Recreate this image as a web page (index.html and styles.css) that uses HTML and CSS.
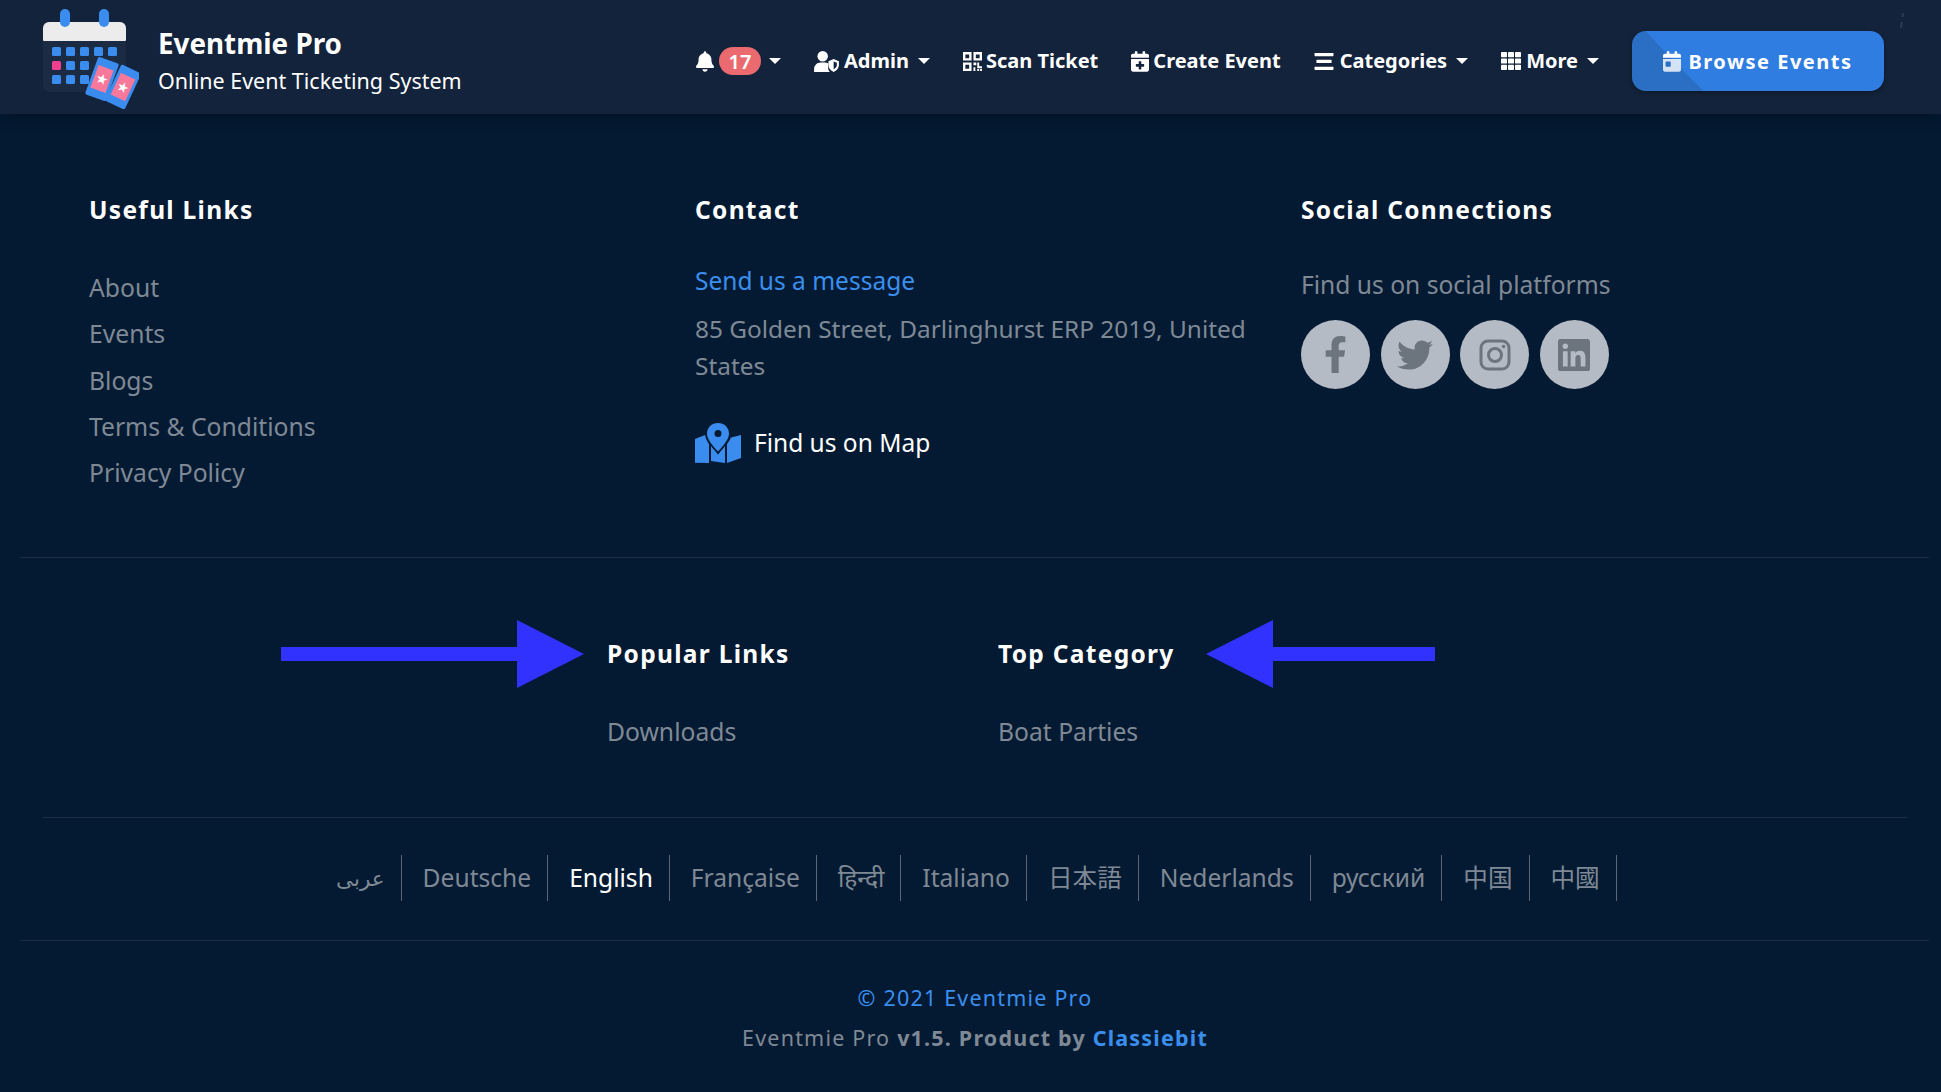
FILE: index.html
```html
<!DOCTYPE html>
<html lang="en">
<head>
<meta charset="utf-8">
<title>Eventmie Pro</title>
<link rel="stylesheet" href="styles.css">
</head>
<body>
<header class="nav">
  <a class="brand">
    <svg class="brand-logo" viewBox="0 0 96 100">
      <rect x="0" y="13" width="83" height="70" rx="6" fill="#1b2b44"/>
      <path d="M0 31V19a6 6 0 0 1 6-6h71a6 6 0 0 1 6 6v12a1 1 0 0 1-1 1H1a1 1 0 0 1-1-1z" fill="#ececec"/>
      <rect x="17" y="0" width="10" height="18" rx="5" fill="#3a8dee"/>
      <rect x="56" y="0" width="10" height="18" rx="5" fill="#3a8dee"/>
      <g fill="#3a8dee">
        <rect x="9" y="38" width="9" height="9" rx="1.5"/><rect x="23" y="38" width="9" height="9" rx="1.5"/><rect x="37" y="38" width="9" height="9" rx="1.5"/><rect x="51" y="38" width="9" height="9" rx="1.500"/><rect x="65" y="38" width="9" height="9" rx="1.5"/>
        <rect x="23" y="52" width="9" height="9" rx="1.5"/><rect x="37" y="52" width="9" height="9" rx="1.5"/>
        <rect x="9" y="66" width="9" height="9" rx="1.5"/><rect x="23" y="66" width="9" height="9" rx="1.5"/><rect x="37" y="66" width="9" height="9" rx="1.5"/>
      </g>
      <rect x="9" y="52" width="9" height="9" rx="1.5" fill="#ef3f8e"/>
      <g transform="rotate(20 59 70)">
        <rect x="48" y="50" width="22" height="40" rx="2" fill="#3a8dee"/>
        <rect x="51" y="58" width="16" height="24" fill="#f7789b"/>
        <text x="59" y="75" class="logo-star">★</text>
      </g>
      <g transform="rotate(25 80 78)">
        <rect x="69" y="58" width="22" height="40" rx="2" fill="#3a8dee"/>
        <rect x="72" y="66" width="16" height="24" fill="#f7789b"/>
        <text x="80" y="83" class="logo-star">★</text>
      </g>
    </svg>
    <span class="brand-text">
      <strong class="brand-name">Eventmie Pro</strong>
      <span class="brand-tag">Online Event Ticketing System</span>
    </span>
  </a>
  <nav class="menu">
    <a class="menu-item menu-bell">
      <svg class="ico ico-bell" viewBox="0 0 448 512"><path d="M224 512c35.32 0 63.97-28.65 63.97-64H160.03c0 35.35 28.65 64 63.97 64zm215.39-149.71c-19.32-20.76-55.47-51.99-55.47-154.29 0-77.7-54.48-139.9-127.94-155.16V32c0-17.67-14.32-32-31.98-32s-31.98 14.33-31.98 32v20.84C118.56 68.1 64.08 130.3 64.08 208c0 102.3-36.15 133.53-55.47 154.29-6 6.45-8.66 14.16-8.61 21.71.11 16.4 12.98 32 32.1 32h383.8c19.12 0 32-15.6 32.1-32 .05-7.55-2.61-15.27-8.61-21.71z"/></svg>
      <span class="badge">17</span>
      <i class="caret"></i>
    </a>
    <a class="menu-item">
      <svg class="ico ico-user" viewBox="0 0 26 22"><circle cx="9" cy="5.5" r="5.5"/><path d="M0 22v-3c0-4 3-7 7-7h4c1.500 0 2.700.4 3.800 1v5c0 1.600.7 3 1.900 4z"/><path d="M20.500 8.500l5.500 2.200v4c0 3.500-2.500 6-5.500 7.300-3-1.300-5.500-3.800-5.500-7.300v-4zm0 2.500v8.200c1.700-.9 3.300-2.500 3.300-4.600v-2.300z" fill-rule="evenodd"/></svg>
      <span>Admin</span>
      <i class="caret"></i>
    </a>
    <a class="menu-item">
      <svg class="ico ico-qr" viewBox="0 0 20 20"><path fill-rule="evenodd" d="M0 0h9v9H0zm2.500 2.500v4h4v-4zM11 0h9v9h-9zm2.500 2.500v4h4v-4zM0 11h9v9H0zm2.500 2.500v4h4v-4z"/><path d="M11 11h3v3h-3zM15 11h2v4h3v2h-5zM11 16h2v4h-2zM15 18h2v2h-2zM18 18h2v2h-2z"/></svg>
      <span>Scan Ticket</span>
    </a>
    <a class="menu-item">
      <svg class="ico ico-cal" viewBox="0 0 448 512"><path d="M436 160H12c-6.600 0-12-5.400-12-12v-36c0-26.500 21.500-48 48-48h48V12c0-6.600 5.400-12 12-12h40c6.600 0 12 5.400 12 12v52h128V12c0-6.600 5.400-12 12-12h40c6.600 0 12 5.400 12 12v52h48c26.500 0 48 21.500 48 48v36c0 6.600-5.400 12-12 12zM12 192h424c6.600 0 12 5.400 12 12v260c0 26.500-21.500 48-48 48H48c-26.500 0-48-21.500-48-48V204c0-6.600 5.400-12 12-12zm316 140c0-6.600-5.400-12-12-12h-60v-60c0-6.600-5.400-12-12-12h-40c-6.600 0-12 5.400-12 12v60h-60c-6.600 0-12 5.400-12 12v40c0 6.600 5.400 12 12 12h60v60c0 6.600 5.400 12 12 12h40c6.600 0 12-5.400 12-12v-60h60c6.600 0 12-5.400 12-12v-40z"/></svg>
      <span>Create Event</span>
    </a>
    <a class="menu-item">
      <svg class="ico ico-bars" viewBox="0 0 20 18"><rect y="0" width="20" height="3.500" rx=".5"/><rect x="2" y="7.200" width="16" height="3.500" rx=".5"/><rect y="14.500" width="20" height="3.500" rx=".5"/></svg>
      <span>Categories</span>
      <i class="caret"></i>
    </a>
    <a class="menu-item">
      <svg class="ico ico-grid" viewBox="0 0 20 18"><rect width="6" height="5.200" rx=".7"/><rect x="7" width="6" height="5.200" rx=".7"/><rect x="14" width="6" height="5.200" rx=".7"/><rect y="6.400" width="6" height="5.200" rx=".7"/><rect x="7" y="6.400" width="6" height="5.200" rx=".7"/><rect x="14" y="6.400" width="6" height="5.200" rx=".7"/><rect y="12.800" width="6" height="5.200" rx=".7"/><rect x="7" y="12.800" width="6" height="5.200" rx=".7"/><rect x="14" y="12.800" width="6" height="5.200" rx=".7"/></svg>
      <span>More</span>
      <i class="caret"></i>
    </a>
    <a class="browse">
      <svg class="ico ico-browse" viewBox="0 0 448 512"><path opacity=".8" d="M0 464c0 26.500 21.500 48 48 48h352c26.500 0 48-21.500 48-48V192H0v272zm64-192c0-8.800 7.200-16 16-16h96c8.800 0 16 7.200 16 16v96c0 8.800-7.200 16-16 16H80c-8.800 0-16-7.200-16-16v-96z" fill-rule="evenodd"/><path d="M400 64h-48V16c0-8.800-7.200-16-16-16h-32c-8.800 0-16 7.200-16 16v48H160V16c0-8.800-7.200-16-16-16h-32c-8.800 0-16 7.200-16 16v48H48C21.500 64 0 85.500 0 112v48h448v-48c0-26.500-21.500-48-48-48z"/></svg>
      <span>Browse Events</span>
    </a>
  </nav>
  <i class="speck"></i>
</header>

<footer class="footer">
  <section class="columns">
    <div class="col">
      <h3 class="col-title">Useful Links</h3>
      <ul class="links">
        <li>About</li><li>Events</li><li>Blogs</li><li>Terms &amp; Conditions</li><li>Privacy Policy</li>
      </ul>
    </div>
    <div class="col">
      <h3 class="col-title">Contact</h3>
      <a class="contact-link">Send us a message</a>
      <p class="address">85 Golden Street, Darlinghurst ERP 2019, United States</p>
      <a class="map-link">
        <svg class="map-ico" viewBox="0 0 46 40"><path fill="#3a8dee" fill-rule="evenodd" d="M23 0c6.500 0 11 4.700 11 10.500C34 17 27 24 23 28.500 19 24 12 17 12 10.500 12 4.700 16.500 0 23 0zm0 7a3.500 3.500 0 1 0 0 7 3.500 3.500 0 0 0 0-7z"/><path fill="#3a8dee" d="M0 16l10-4c.5 3.500 2.500 7 4 9v19L0 39.800c0 0 0-23.800 0-23.800zM16 23c2 2.800 5 6 7 8.500 2-2.500 5-5.700 7-8.500v17l-14-2zM32 21c1.500-2 3-4 4-6.500l10-2.500v23l-14 5z"/></svg>
        <span>Find us on Map</span>
      </a>
    </div>
    <div class="col">
      <h3 class="col-title">Social Connections</h3>
      <p class="social-lead">Find us on social platforms</p>
      <div class="socials">
        <a class="social"><svg class="social-ico social-fb" viewBox="0 0 320 512"><path d="M279.140 288l14.220-92.660h-88.910v-60.130c0-25.350 12.420-50.060 52.240-50.060h40.420V6.260S260.430 0 225.360 0c-73.220 0-121.080 44.380-121.080 124.720v70.620H22.890V288h81.390v224h100.170V288z"/></svg></a>
        <a class="social"><svg class="social-ico social-tw" viewBox="0 0 512 512"><path d="M459.37 151.716c.325 4.548.325 9.097.325 13.645 0 138.720-105.583 298.558-298.558 298.558-59.452 0-114.680-17.219-161.137-47.106 8.447.974 16.568 1.299 25.340 1.299 49.055 0 94.213-16.568 130.274-44.832-46.132-.975-84.792-31.188-98.112-72.772 6.498.974 12.995 1.624 19.818 1.624 9.421 0 18.843-1.300 27.614-3.573-48.081-9.747-84.143-51.980-84.143-102.985v-1.299c13.969 7.797 30.214 12.670 47.431 13.319-28.264-18.843-46.781-51.005-46.781-87.391 0-19.492 5.197-37.360 14.294-52.954 51.655 63.675 129.300 105.258 216.365 109.807-1.624-7.797-2.599-15.918-2.599-24.040 0-57.828 46.782-104.934 104.934-104.934 30.213 0 57.502 12.670 76.670 33.137 23.715-4.548 46.456-13.320 66.599-25.340-7.798 24.366-24.366 44.833-46.132 57.827 21.117-2.273 41.584-8.122 60.426-16.243-14.292 20.791-32.161 39.308-52.628 54.253z"/></svg></a>
        <a class="social"><svg class="social-ico" viewBox="0 0 32 32"><rect x="2" y="2" width="28" height="28" rx="7" fill="none" stroke="#6c757d" stroke-width="3"/><circle cx="16" cy="16" r="6.500" fill="none" stroke="#6c757d" stroke-width="3"/><circle cx="24.500" cy="7.500" r="1.800"/></svg></a>
        <a class="social"><svg class="social-ico" viewBox="0 32 448 448"><path d="M416 32H31.900C14.300 32 0 46.500 0 64.300v383.400C0 465.500 14.300 480 31.900 480H416c17.600 0 32-14.500 32-32.300V64.300c0-17.800-14.400-32.300-32-32.300zM135.400 416H69V202.200h66.500V416zm-33.200-243c-21.300 0-38.500-17.300-38.500-38.500S80.900 96 102.200 96c21.200 0 38.500 17.300 38.500 38.500 0 21.300-17.200 38.500-38.500 38.500zm282.100 243h-66.400V312c0-24.800-.5-56.700-34.500-56.700-34.600 0-39.900 27-39.900 54.900V416h-66.400V202.200h63.700v29.200h.9c8.900-16.800 30.600-34.500 62.900-34.500 67.200 0 79.700 44.300 79.700 101.900V416z"/></svg></a>
      </div>
    </div>
  </section>

  <hr class="rule">

  <section class="popular">
    <div class="pop-col pop-col-links">
      <svg class="arrow arrow-right" viewBox="0 0 303 68"><path d="M0 27h236V0l67 34-67 34V41H0z"/></svg>
      <h3 class="col-title">Popular Links</h3>
      <p class="pop-item">Downloads</p>
    </div>
    <div class="pop-col pop-col-cat">
      <svg class="arrow arrow-left" viewBox="0 0 229 68"><path d="M229 27H67V0L0 34l67 34V41h162z"/></svg>
      <h3 class="col-title">Top Category</h3>
      <p class="pop-item">Boat Parties</p>
    </div>
  </section>

  <hr class="rule rule-inset">

  <ul class="langs">
    <li class="lang lang-ar">عربى</li>
    <li class="lang">Deutsche</li>
    <li class="lang lang-active">English</li>
    <li class="lang">Française</li>
    <li class="lang">हिन्दी</li>
    <li class="lang">Italiano</li>
    <li class="lang">日本語</li>
    <li class="lang">Nederlands</li>
    <li class="lang">русский</li>
    <li class="lang">中国</li>
    <li class="lang">中國</li>
  </ul>

  <hr class="rule">

  <div class="credits">
    <p class="credit-line"><span class="blue">© 2021 Eventmie Pro</span></p>
    <p class="credit-line">Eventmie Pro <b>v1.5. Product by</b> <b class="blue">Classiebit</b></p>
  </div>
</footer>
</body>
</html>
```
FILE: styles.css
```css
* { box-sizing: border-box; }
html, body { margin: 0; padding: 0; }
body {
  width: 1941px;
  height: 1092px;
  overflow: hidden;
  background: #041a32;
  font-family: "Noto Sans", "DejaVu Sans", "Noto Sans CJK JP", sans-serif;
  color: #7f8995;
}
h3, p, ul { margin: 0; padding: 0; }
ul { list-style: none; }

/* top bar */
.nav {
  height: 114px;
  background: #13233b;
  display: flex;
  align-items: center;
  justify-content: space-between;
  padding: 8px 57px 0 43px;
  box-shadow: 0 4px 12px rgba(0, 8, 20, .35);
  position: relative;
}
.brand { display: flex; align-items: center; gap: 19px; margin-top: 3px; }
.brand-logo { width: 96px; height: 100px; margin-bottom: 7px; }
.logo-star { font-family: "DejaVu Sans", sans-serif; font-size: 14px; fill: #fff; text-anchor: middle; }
.brand-text { display: flex; flex-direction: column; color: #fff; }
.brand-name { font-size: 27.800px; line-height: 37px; font-weight: 700; }
.brand-tag { font-size: 21.500px; line-height: 38px; }
.menu { display: flex; align-items: center; gap: 33px; color: #fff; font-size: 20px; font-weight: 700; }
.menu-item { display: flex; align-items: center; gap: 4px; line-height: 28px; }
.ico { fill: #fff; display: block; flex: none; }
.ico-bell { width: 18px; height: 21px; margin-right: 1px; }
.ico-user { width: 25px; height: 21px; margin-right: 1px; }
.ico-qr { width: 19px; height: 19px; }
.ico-cal { width: 18px; height: 21px; }
.ico-bars { width: 20px; height: 17px; margin-right: 2px; }
.ico-grid { width: 20px; height: 18px; margin-right: 1px; }
.badge {
  background: #ea6a6f;
  color: #fff;
  border-radius: 14px;
  height: 28px;
  width: 42px;
  text-align: center;
  font-size: 20px;
  line-height: 29px;
  font-weight: 600;
}
.caret {
  width: 0;
  height: 0;
  margin-left: 5px;
  border: 6px solid transparent;
  border-top: 6px solid #fff;
  border-bottom: 0;
}
.menu-bell .caret { margin-left: 4px; }
.browse {
  width: 252px;
  height: 60px;
  border-radius: 14px;
  background: linear-gradient(46deg, #2b6fc4 0, #2b6fc4 23%, #2f7de0 23%);
  box-shadow: 0 2px 5px rgba(0, 0, 0, .3);
  display: flex;
  align-items: center;
  justify-content: center;
  gap: 7px;
  letter-spacing: 1.500px;
}
.ico-browse { width: 18px; height: 21px; }
.speck {
  position: absolute;
  left: 1901px;
  top: 13px;
  width: 2px;
  height: 15px;
  background: linear-gradient(#2b3a50 0, #2b3a50 25%, transparent 25%, transparent 60%, #2b3a50 60%);
  transform: rotate(8deg);
}

/* columns */
.columns {
  display: grid;
  grid-template-columns: repeat(3, 606px);
  padding: 81px 0 0 89px;
  height: 443px;
}
.col { padding-right: 20px; }
.col-title { color: #fff; font-size: 24.500px; line-height: 29px; font-weight: 700; letter-spacing: 1.300px; }
.links { margin-top: 41px; font-size: 24.700px; line-height: 46.300px; }
.contact-link { display: block; margin-top: 39px; color: #3a8fee; font-size: 24.500px; line-height: 36px; }
.address { margin-top: 10.500px; font-size: 24.400px; line-height: 37px; }
.map-link { display: flex; align-items: center; gap: 13px; margin-top: 39.500px; color: #fff; font-size: 24.500px; line-height: 40px; }
.map-ico { width: 46px; height: 40px; }
.social-lead { margin-top: 43px; font-size: 24.600px; line-height: 36px; }
.socials { display: flex; gap: 10.500px; margin-top: 17.400px; }
.social {
  width: 69px;
  height: 69px;
  border-radius: 50%;
  background: #b5bbc4;
  display: flex;
  align-items: center;
  justify-content: center;
}
.social-ico { width: 32px; height: 32px; fill: #6c757d; }
.social-fb { width: 23px; height: 37px; }
.social-tw { width: 36px; height: 36px; }

.rule { margin: 0 12px 0 20px; border: 0; border-top: 1px solid #1c2d45; }
.rule-inset { margin: 0 34px 0 43px; }

/* popular */
.popular { height: 259px; display: flex; padding: 81px 0 0 607px; }
.pop-col { position: relative; }
.pop-col-links { width: 391px; }
.pop-item { margin-top: 46px; font-size: 24.700px; line-height: 36px; }
.arrow { position: absolute; fill: #3232ff; height: 68px; top: -19px; }
.arrow-right { width: 303px; left: -326px; }
.arrow-left { width: 229px; left: 208px; }

/* languages */
.langs { height: 122px; display: flex; padding: 37px 0 0 336px; font-size: 24.600px; }
.lang { height: 46px; line-height: 46px; padding: 0 16px 0 21px; border-right: 1px solid #5a6676; }
.lang-ar { padding-left: 0; font-size: 21.500px; }
.lang-active { color: #fff; }

/* credits */
.credits { padding: 37px 0 0 9px; text-align: center; font-size: 21.500px; letter-spacing: 1.200px; line-height: 40px; }
.credit-line b { font-weight: 700; }
.blue { color: #3a8fee; }
```
